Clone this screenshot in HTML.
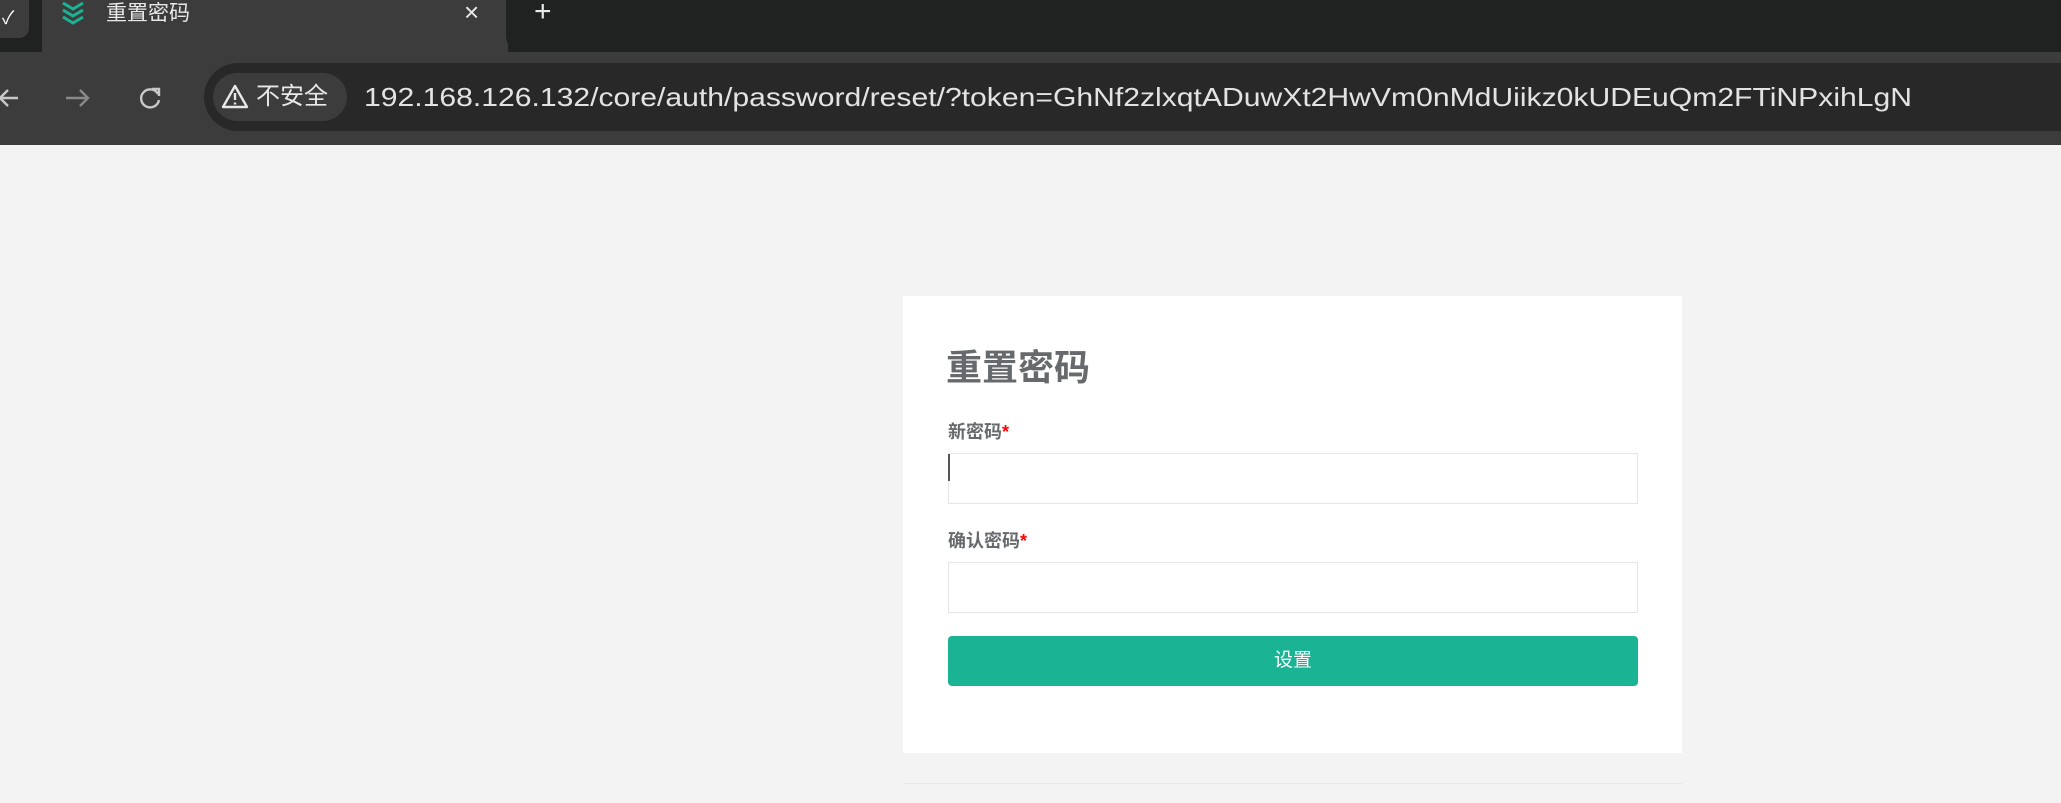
<!DOCTYPE html>
<html><head><meta charset="utf-8"><style>
*{margin:0;padding:0;box-sizing:border-box}
body{width:2061px;height:803px;overflow:hidden;background:#f3f3f4;font-family:"Liberation Sans","Noto Sans CJK SC",sans-serif;position:relative}
.abs{position:absolute}
</style></head><body>
<div class="abs" style="left:0;top:0;width:2061px;height:52px;background:#202121"></div>
<div class="abs" style="left:0;top:0;width:29px;height:38px;background:#3c3c3c;border-radius:0 0 10px 0"></div>
<div class="abs" style="left:2px;top:4px;color:#fff;font-size:18px">✓</div>
<div class="abs" style="left:42px;top:0;width:466px;height:52px;background:#3c3c3c;border-radius:0 0 0 0"></div>
<div class="abs" style="left:506px;top:0;width:1555px;height:52px;background:#202121;border-radius:0 0 0 16px"></div>
<svg class="abs" style="left:60px;top:0" width="26" height="28" viewBox="0 0 26 28"><path d="M3 3 L13 9 L23 3 M3 10 L13 16 L23 10 M3 17 L13 23 L23 17" stroke="#1ab394" stroke-width="3" fill="none"/></svg>
<div class="abs" style="left:106px;top:0;color:#e8e8e8;font-size:21px;line-height:28px">重置密码</div>
<div class="abs" style="left:464px;top:-2px;color:#e8e8e8;font-size:26px;line-height:28px">×</div>
<div class="abs" style="left:534px;top:-3px;color:#e8e8e8;font-size:30px;line-height:30px">+</div>
<div class="abs" style="left:0;top:52px;width:2061px;height:93px;background:#3c3c3c"></div>
<svg class="abs" style="left:0;top:84px" width="170" height="28" viewBox="0 0 170 28">
<path d="M18 14 H0 M8 6 L0 14 L8 22" stroke="#c8c8c8" stroke-width="2.4" fill="none"/>
<path d="M66 14 H88 M80 6 L88 14 L80 22" stroke="#8a8a8a" stroke-width="2.4" fill="none"/>
<path d="M158 10 A9 9 0 1 0 159 16" stroke="#c8c8c8" stroke-width="2.4" fill="none"/><path d="M152 5 H159 V12" stroke="#c8c8c8" stroke-width="2.4" fill="none"/>
</svg>
<div class="abs" style="left:204px;top:63px;width:1900px;height:68px;background:#282828;border-radius:34px"></div>
<div class="abs" style="left:213px;top:73px;width:134px;height:48px;background:#3c3c3c;border-radius:24px"></div>
<svg class="abs" style="left:221px;top:84px" width="28" height="26" viewBox="0 0 28 26"><path d="M14 2 L26 23 H2 Z" stroke="#e8e8e8" stroke-width="2.4" fill="none" stroke-linejoin="round"/><path d="M14 9 V16 M14 18.5 V20.5" stroke="#e8e8e8" stroke-width="2.4"/></svg>
<div class="abs" style="left:256px;top:82px;color:#e8e8e8;font-size:24px;line-height:30px">不安全</div>
<svg class="abs" style="left:364px;top:78px" width="1560" height="40"><text x="0" y="28" font-family="Liberation Sans, sans-serif" font-size="26" fill="#e3e3e3" textLength="1548" lengthAdjust="spacingAndGlyphs">192.168.126.132/core/auth/password/reset/?token=GhNf2zlxqtADuwXt2HwVm0nMdUiikz0kUDEuQm2FTiNPxihLgN</text></svg>
<div class="abs" style="left:903px;top:296px;width:779px;height:457px;background:#fff"></div>
<div class="abs" style="left:903px;top:783px;width:779px;height:1px;background:#e7e7e7"></div>
<div class="abs" style="left:946px;top:346px;color:#676a6c;font-size:36px;font-weight:bold;line-height:44px">重置密码</div>
<div class="abs" style="left:948px;top:420px;color:#676a6c;font-size:18px;font-weight:bold;line-height:24px">新密码<span style="color:#f00">*</span></div>
<div class="abs" style="left:948px;top:453px;width:690px;height:51px;border:1px solid #e5e6e7;background:#fff"></div>
<div class="abs" style="left:948px;top:454px;width:2px;height:27px;background:#555"></div>
<div class="abs" style="left:948px;top:529px;color:#676a6c;font-size:18px;font-weight:bold;line-height:24px">确认密码<span style="color:#f00">*</span></div>
<div class="abs" style="left:948px;top:562px;width:690px;height:51px;border:1px solid #e5e6e7;background:#fff"></div>
<div class="abs" style="left:948px;top:636px;width:690px;height:50px;background:#1ab394;border-radius:4px;color:#fff;font-size:19px;text-align:center;line-height:50px">设置</div>
</body></html>
